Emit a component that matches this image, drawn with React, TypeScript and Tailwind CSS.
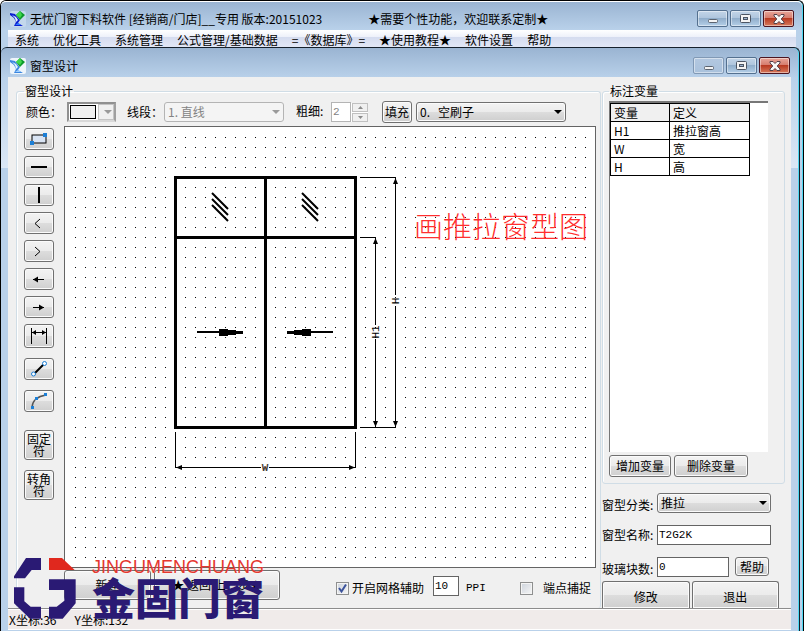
import type { ReactNode } from "react";

const cjk = "font-['Noto_Sans_CJK_SC',sans-serif]";
const mono = "font-['Liberation_Mono','Noto_Sans_CJK_SC',monospace]";
const face =
  "rounded-[3px] border border-[#707070] bg-[linear-gradient(#f3f3f3,#ebebeb_50%,#dddddd_50%,#cfcfcf)] shadow-[inset_0_0_0_1px_#fbfbfb]";
const fieldBox = `${mono} border border-[#646464] bg-white px-px text-[11px] leading-[16px] outline-none`;

function AppIcon({ pale }: { pale?: boolean }) {
  return (
    <svg viewBox="0 0 16 16" className="size-4 shrink-0" aria-hidden="true">
      <rect width="16" height="16" rx="2" fill={pale ? "#eef5fb" : "#c3d8ec"} />
      <path d="M0 2L5 3L8 7L10 9L8 12L13 15H4L6 11L4 7L0 4Z" fill={pale ? "#3b86e0" : "#0a1fd0"} />
      <path d="M2 4L6 6L8 9L6 11L5 7Z" fill="#e4f4ff" />
      <path d="M5 14L8 12L11 14Z" fill={pale ? "#9fd0ff" : "#2f7bff"} />
      <path d="M10 0L15 4L10 9L6 4Z" fill="#0d9a2c" />
      <path d="M10 0L12 4L10 7L6 4Z" fill="#3fd94c" />
    </svg>
  );
}

const capFace =
  "flex h-[17px] w-[31px] items-center justify-center rounded-[2px] border shadow-[inset_0_0_0_1px_rgba(255,255,255,0.45)]";

function WindowControls({ dim }: { dim?: boolean }) {
  const blue = "border-[#54708f] bg-[linear-gradient(#c3d5e8,#adc4dc_50%,#91aecb_50%,#b4cfe8)]";
  const pale = "border-[#8199b5] bg-[linear-gradient(#b3c8e0,#a9c1dc)]";
  return (
    <div className="flex gap-[2px]">
      <button aria-label="最小化" className={`${capFace} ${dim ? pale : blue}`}>
        <svg width="12" height="12" viewBox="0 0 12 12">
          <rect x="1.5" y="6.5" width="9" height="3" rx="1" fill="#f4f4f4" stroke="#5c6470" />
        </svg>
      </button>
      <button aria-label="还原" className={`${capFace} ${blue}`}>
        <svg width="12" height="10" viewBox="0 0 12 10">
          <rect x="0.5" y="0.5" width="10" height="8" rx="1" fill="#f4f4f4" stroke="#4c5563" />
          <rect x="3.5" y="3.5" width="4" height="2" fill="#9db4cf" stroke="#4c5563" />
        </svg>
      </button>
      <button
        aria-label="关闭"
        className={`${capFace} border-[#4c1420] bg-[linear-gradient(#e8a599,#d5796a_50%,#b93a22_50%,#d77a5c)]`}
      >
        <svg width="12" height="10" viewBox="0 0 12 10">
          <path d="M1 0.5H4L6 2.5L8 0.5H11V2L8.2 5L11 8V9.5H8L6 7.5L4 9.5H1V8L3.8 5L1 2Z" fill="#f6f6f6" stroke="#54404a" />
        </svg>
      </button>
    </div>
  );
}

function Arrow({ dim }: { dim?: boolean }) {
  return (
    <svg
      width="8"
      height="4"
      viewBox="0 0 8 4"
      className="pointer-events-none absolute right-1 top-1/2 -translate-y-1/2"
      aria-hidden="true"
    >
      <path d="M0 0H8L4 4Z" fill={dim ? "#9a9a9a" : "#000"} />
    </svg>
  );
}

function PushButton({ className, children }: { className: string; children: ReactNode }) {
  return <button className={`${face} text-[12px] leading-[16px] ${className}`}>{children}</button>;
}

const dot = "#1c7fd6";

const tools: { name: string; icon: ReactNode }[] = [
  {
    name: "矩形",
    icon: (
      <>
        <rect x="2" y="4" width="14" height="8" fill="#d9e4f3" stroke="#000" />
        <rect x="0" y="10" width="4" height="4" fill={dot} />
        <rect x="13" y="2" width="4" height="4" fill={dot} />
      </>
    ),
  },
  { name: "横线", icon: <rect x="1" y="7" width="16" height="2" /> },
  { name: "竖线", icon: <rect x="8" y="0" width="2" height="16" /> },
  { name: "左开", icon: <path d="M10 4L5 8.5L10 13" fill="none" stroke="#000" /> },
  { name: "右开", icon: <path d="M5 4L10 8.5L5 13" fill="none" stroke="#000" /> },
  {
    name: "左箭头",
    icon: (
      <>
        <rect x="3" y="8" width="11" height="1" />
        <path d="M3 8.5L8 5.5V11.5Z" />
      </>
    ),
  },
  {
    name: "右箭头",
    icon: (
      <>
        <rect x="3" y="8" width="11" height="1" />
        <path d="M14 8.5L9 5.5V11.5Z" />
      </>
    ),
  },
  {
    name: "标注",
    icon: (
      <>
        <rect x="1" y="0" width="1" height="16" />
        <rect x="16" y="0" width="1" height="16" />
        <rect x="2" y="4" width="14" height="1" />
        <path d="M2 4.5L6 2V7ZM16 4.5L12 2V7Z" />
      </>
    ),
  },
];

function ToolButton({ name, className, children }: { name: string; className: string; children: ReactNode }) {
  return (
    <button aria-label={name} className={`${face} flex w-[30px] items-center justify-center ${className}`}>
      <svg width="18" height="16" viewBox="0 0 18 16" aria-hidden="true">
        {children}
      </svg>
    </button>
  );
}

function Drawing() {
  return (
    <svg className="min-h-[432px] w-full flex-1" aria-label="窗型图">
      <defs>
        <pattern id="grid" width="10" height="10" patternUnits="userSpaceOnUse">
          <rect width="1" height="1" />
        </pattern>
      </defs>
      <rect x="10" y="10" width="511" height="421" fill="url(#grid)" />
      <g shapeRendering="crispEdges">
        <g fill="none" stroke="#000" strokeWidth="3">
          <path d="M110.5 50.5H290.5V300.5H110.5Z" />
          <path d="M200.5 50V300M110 110.5H290" />
        </g>
        <g fill="none" stroke="#000" strokeWidth="1">
          <path d="M295 50.5H331M330.5 51V168M330.5 179V300M295 300.5H331" />
          <path d="M295 110.5H311M310.5 111V198M310.5 212V300" />
          <path d="M110.5 305V341M290.5 305V341M111 340.5H196M204 340.5H290" />
        </g>
        <path d="M132 204H154V202H163V203H171V204H178V207H171V208H163V209H154V206H132Z" />
        <path d="M268 204H246V202H237V203H229V204H222V207H229V208H237V209H246V206H268Z" />
      </g>
      <g stroke="#000" strokeWidth="2">
        <path d="M147 66L163 82M147 72L163 88M147 78L163 94" />
        <path d="M237 66L253 82M237 72L253 88M237 78L253 94" />
      </g>
      <path d="M330.5 51L333 57H328ZM330.5 300L333 294H328ZM310.5 111L313 117H308ZM310.5 300L313 294H308ZM111 340.5L117 338V343ZM290 340.5L284 338V343Z" />
      <g className="font-['Liberation_Mono',monospace] text-[11px]" textAnchor="middle">
        <text transform="translate(334 174) rotate(-90)">H</text>
        <text transform="translate(314 205) rotate(-90)">H1</text>
        <text x="200" y="344" className="font-bold" fill="#4a4038">
          W
        </text>
      </g>
      <text x="349" y="111" fill="#ff3030" className={`${cjk} text-[29px] font-light`}>
        画推拉窗型图
      </text>
    </svg>
  );
}

function Logo() {
  return (
    <div className="pointer-events-none absolute bottom-[12px] left-[13px] flex items-start gap-4">
      <svg width="62" height="61" viewBox="42 174 186 183" aria-hidden="true">
        <g fill="#2a1a74">
          <path d="M78 174H123V210H95L75 235H42V229Z" />
          <path d="M42 262H73V304L92 320H123V356H90L42 310Z" />
          <path d="M147 238H227V310L188 356H147V320H170L193 302V270H147Z" />
        </g>
        <path d="M147 174H186L224 210H147Z" fill="#e0281e" />
      </svg>
      <div className="flex flex-col">
        <span className="font-['Liberation_Sans',sans-serif] text-[18px] leading-[18px] text-[#e5382f]">
          JINGUMENCHUANG
        </span>
        <span className={`${cjk} text-[43px] font-black leading-[40px] text-[#2a1a74]`}>金固门窗</span>
      </div>
    </div>
  );
}

const variables = [
  ["H1", "推拉窗高"],
  ["W", "宽"],
  ["H", "高"],
];

const menu = ["系统", "优化工具", "系统管理", "公式管理/基础数据", "=《数据库》=", "★使用教程★", "软件设置", "帮助"];

const group = "min-w-0 rounded-[3px] border border-[#d0dde6] shadow-[inset_1px_1px_0_#fff]";
const cell = "h-[18px] border border-black px-[3px] py-0 text-left font-normal leading-[16px]";

export default function App() {
  return (
    <div
      className={`${cjk} relative flex min-h-screen flex-col rounded-t-[6px] border-x border-t border-black bg-[#b9d1ea] text-[12px] leading-[16px] text-black shadow-[inset_-1px_0_0_#4fd8f2]`}
    >
      <header className="mr-px flex h-[29px] items-center rounded-t-[5px] border-t border-white bg-[linear-gradient(#9ab4d2,#b9d1ea)] pl-[9px] pr-2 pt-[5px]">
        <AppIcon />
        <h1 className="ml-1 whitespace-pre">无忧门窗下料软件 [经销商/门店]__专用 版本:20151023</h1>
        <span className="ml-[46px] flex-1 whitespace-nowrap">★需要个性功能，欢迎联系定制★</span>
        <WindowControls />
      </header>
      <nav className="ml-[7px] mr-[7px] flex h-[17px] items-center gap-[14px] bg-[linear-gradient(#ffffff,#eef1fa_40%,#d5dcef_42%,#e2e7f6)] pl-[7px] pt-[2px]">
        {menu.map((m) => (
          <button key={m} className="whitespace-nowrap">
            {m}
          </button>
        ))}
      </nav>

      <section className="mr-[3px] flex flex-1 flex-col rounded-t-[6px] border-r border-t border-[#15202c] bg-[linear-gradient(#9ab4d2,#b9d1ea_30px,#dbe7f5_120px,#b9d1ea_120px)] pb-px pl-[7px] shadow-[inset_-1px_0_0_#4fd8f2]">
        <header className="flex h-[29px] items-center pl-[2px] pr-[9px] pt-[6px]">
          <AppIcon pale />
          <h2 className="ml-1 flex-1">窗型设计</h2>
          <WindowControls dim />
        </header>

        <div className="mr-[8px] flex flex-1 flex-col bg-[#f0f0f0]">
          <main className="flex flex-1 pl-[8px] pt-[7px]">
            <fieldset className={`${group} flex flex-1 flex-col border-b-0 pl-[7px] pr-[4px]`}>
              <legend className="px-[1px] leading-[14px]">窗型设计</legend>
              <div className="flex h-[28px] items-center whitespace-nowrap">
                <label htmlFor="color" className="ml-[2px] w-[41px]">
                  颜色：
                </label>
                <span className="relative h-5 w-[49px]">
                  <select
                    id="color"
                    className="h-5 w-full appearance-none border-2 border-[#909090] border-b-[#d8d8d8] border-r-[#a0a0a0] bg-white text-transparent"
                  >
                    <option />
                  </select>
                  <span className="pointer-events-none absolute left-[3px] top-[3px] h-[14px] w-[26px] border border-black bg-[#f0f0f0]" />
                  <span className="pointer-events-none absolute right-[2px] top-[2px] h-4 w-4 border border-[#c4c4c4] bg-[#f0f0f0]" />
                  <Arrow dim />
                </span>
                <label htmlFor="line" className="ml-[11px] w-[37px]">
                  线段：
                </label>
                <span className="relative h-5 w-[120px]">
                  <select
                    id="line"
                    disabled
                    className="h-5 w-full appearance-none rounded-[3px] border border-[#b4b4b4] bg-[#f4f4f4] pl-[3px] text-[#838383] opacity-100"
                  >
                    <option>1. 直线</option>
                  </select>
                  <Arrow dim />
                </span>
                <label htmlFor="weight" className="ml-3 w-[35px] pb-[2px]">
                  粗细:
                </label>
                <input
                  id="weight"
                  disabled
                  defaultValue="2"
                  className={`${mono} h-5 w-5 border border-[#b4b4b4] bg-white px-px text-[11px] text-[#838383]`}
                />
                <span className="flex w-[17px] flex-col gap-px bg-white pl-px">
                  <button aria-label="增加" disabled className="flex h-[9px] items-center justify-center border border-[#c0c0c0] bg-[#f0f0f0]">
                    <svg width="5" height="3" viewBox="0 0 5 3"><path d="M0 3L2.5 0L5 3Z" fill="#8a8a8a" /></svg>
                  </button>
                  <button aria-label="减少" disabled className="flex h-[9px] items-center justify-center border border-[#c0c0c0] bg-[#f0f0f0]">
                    <svg width="5" height="3" viewBox="0 0 5 3"><path d="M0 0L2.5 3L5 0Z" fill="#8a8a8a" /></svg>
                  </button>
                </span>
                <PushButton className="ml-[14px] h-[22px] w-[30px]">填充</PushButton>
                <span className="relative ml-1 h-5 w-[150px]">
                  <select aria-label="填充样式" className={`${face} h-5 w-full appearance-none whitespace-pre pl-[3px] outline-none`}>
                    <option>0.&nbsp;&nbsp; 空刷子</option>
                  </select>
                  <Arrow />
                </span>
              </div>

              <div className="flex flex-1">
                <div className="mr-[10px] flex w-[30px] flex-col">
                  <div className="mt-[2px] flex flex-col gap-[6px]">
                    {tools.map((t) => (
                      <ToolButton key={t.name} name={t.name} className={t.name === "标注" ? "h-6" : "h-[22px]"}>
                        {t.icon}
                      </ToolButton>
                    ))}
                  </div>
                  <div className="mt-[10px] flex flex-col gap-[10px]">
                    <ToolButton name="线段" className="h-[22px]">
                      <path d="M4 13L14 3" stroke="#000" strokeWidth="2" />
                      <circle cx="3.5" cy="13" r="2" fill="#fff" stroke={dot} />
                      <circle cx="14.5" cy="2.5" r="2" fill="#fff" stroke={dot} />
                    </ToolButton>
                    <ToolButton name="圆弧" className="h-[22px]">
                      <path d="M2 14Q3 4 16 2" fill="none" stroke="#555" strokeWidth="1.5" />
                      <rect x="1" y="13" width="3" height="3" fill={dot} />
                      <rect x="5" y="4" width="3" height="3" fill={dot} />
                      <rect x="14" y="0" width="3" height="3" fill={dot} />
                    </ToolButton>
                  </div>
                  <div className="mt-[18px] flex flex-col gap-[10px]">
                    {["固定符", "转角符"].map((t) => (
                      <button key={t} className={`${face} h-[30px] px-[2px] text-[12px] leading-[12px]`}>
                        {t}
                      </button>
                    ))}
                  </div>
                </div>

                <div className="flex flex-1 flex-col">
                  <div className="flex flex-1 flex-col border border-[#646464] bg-white">
                    <Drawing />
                  </div>
                  <div className="flex h-[40px] items-center whitespace-nowrap">
                    <PushButton className="mb-[6px] h-[30px] w-[87px]">新建</PushButton>
                    <PushButton className="mb-[6px] ml-[3px] h-[30px] w-[126px]">★ 返回 上一步★</PushButton>
                    <span className="relative ml-[56px] size-[13px]">
                      <input
                        id="grid-on"
                        type="checkbox"
                        defaultChecked
                        className="peer block size-[13px] appearance-none border border-[#8e8f8f] bg-[linear-gradient(135deg,#cdd3dc,#f6f6f6)] shadow-[inset_0_0_0_1px_#f4f4f4]"
                      />
                      <svg viewBox="0 0 13 13" className="pointer-events-none absolute inset-0 hidden size-[13px] peer-checked:block">
                        <path d="M3 6L5.5 9.5L10 2.5" fill="none" stroke="#3c539b" strokeWidth="2" />
                      </svg>
                    </span>
                    <label htmlFor="grid-on" className="ml-[3px]">
                      开启网格辅助
                    </label>
                    <input id="ppi" defaultValue="10" className={`${fieldBox} mb-[4px] ml-[9px] h-5 w-[26px]`} />
                    <label htmlFor="ppi" className={`${mono} ml-[7px] w-[54px] text-[11px]`}>
                      PPI
                    </label>
                    <input
                      id="snap"
                      type="checkbox"
                      className="size-[13px] appearance-none border border-[#8e8f8f] bg-[linear-gradient(135deg,#cdd3dc,#f6f6f6)] shadow-[inset_0_0_0_1px_#f4f4f4]"
                    />
                    <label htmlFor="snap" className="ml-[10px]">
                      端点捕捉
                    </label>
                  </div>
                </div>
              </div>
            </fieldset>

            <div className="ml-px flex w-[189px] shrink-0 flex-col">
              <fieldset className={`${group} mr-[6px] flex flex-1 flex-col pb-[6px] pl-[6px] pr-[16px]`}>
                <legend className="px-[1px] leading-[14px]">标注变量</legend>
                <div className="mt-[3px] flex-1 border-l border-t-2 border-[#777] bg-white">
                  <table className="w-[140px] table-fixed border-collapse">
                    <thead>
                      <tr className="bg-[#f0f0f0]">
                        <th className={`${cell} w-[59px]`}>变量</th>
                        <th className={cell}>定义</th>
                      </tr>
                    </thead>
                    <tbody>
                      {variables.map(([k, v]) => (
                        <tr key={k}>
                          <td className={cell}>{k}</td>
                          <td className={cell}>{v}</td>
                        </tr>
                      ))}
                    </tbody>
                  </table>
                </div>
                <div className="mt-[3px] flex gap-[3px]">
                  <PushButton className="h-[22px] w-[62px]">增加变量</PushButton>
                  <PushButton className="h-[22px] w-[74px]">删除变量</PushButton>
                </div>
              </fieldset>

              <div className="mt-[9px] grid grid-cols-[55px_1fr] items-center gap-y-[12px] whitespace-nowrap pr-5">
                <label htmlFor="kind" className="pt-1">窗型分类:</label>
                <span className="relative h-5">
                  <select id="kind" className={`${face} h-5 w-full appearance-none pl-[3px] outline-none`}>
                    <option>推拉</option>
                  </select>
                  <Arrow />
                </span>
                <label htmlFor="name">窗型名称:</label>
                <input id="name" defaultValue="T2G2K" className={`${fieldBox} h-5 w-full min-w-0`} />
                <label htmlFor="panes" className="pt-1">玻璃块数:</label>
                <span className="flex gap-[6px]">
                  <input id="panes" defaultValue="0" className={`${fieldBox} h-5 w-[72px]`} />
                  <PushButton className="h-[19px] w-[34px]">帮助</PushButton>
                </span>
              </div>
              <div className="mt-[4px] flex gap-[2px] pr-[12px]">
                <PushButton className="h-[27px] flex-1 rounded-b-none border-b-0 pt-1">修改</PushButton>
                <PushButton className="h-[27px] flex-1 rounded-b-none border-b-0 pt-1">退出</PushButton>
              </div>
            </div>
          </main>
          <footer className="flex h-[22px] items-center gap-[18px] border-y border-b-white border-t-[#8c8c8c] bg-[#f0ebea] pl-px pt-[2px] shadow-[inset_0_1px_0_#fff]">
            <span>X坐标:36</span>
            <span>Y坐标:132</span>
          </footer>
        </div>
      </section>
      <Logo />
    </div>
  );
}
